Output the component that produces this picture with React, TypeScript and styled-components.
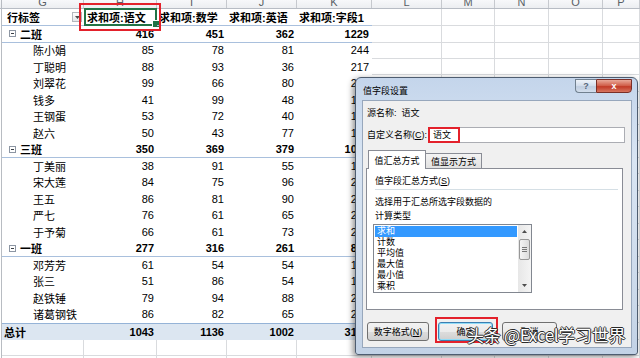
import React from 'react';
import styled, { createGlobalStyle, css } from 'styled-components';

const COLS = '2px 82px 73px 70px 70px 75px 70px 53px 54px 54px 1fr';
const GRID = '#d9dbde';
const FONT = `"Liberation Sans", "Noto Sans CJK SC", sans-serif`;

const GlobalStyle = createGlobalStyle`
  * { box-sizing: border-box; }
  html, body { margin: 0; padding: 0; background: #fff; }
  body { width: 640px; height: 358px; overflow: hidden; font-family: ${FONT}; }
`;

const Sheet = styled.div`
  position: relative;
  width: 640px;
  height: 358px;
  overflow: hidden;
  background: #fff;
  font-family: ${FONT};
  font-size: 11px;
  color: #000;
`;

const ColHeaders = styled.div`
  display: grid;
  grid-template-columns: ${COLS};
  height: 9px;
  background: linear-gradient(#f7f8fa, #eceef1);
  border-bottom: 1px solid #b7bcc4;
`;

const ColLetter = styled.div`
  display: flex;
  align-items: flex-end;
  justify-content: center;
  overflow: hidden;
  border-right: 1px solid #c6c9ce;
  color: #5a5f66;
  font-size: 11px;
  line-height: 12px;
`;

const Row = styled.div`
  display: grid;
  grid-template-columns: ${COLS};
  height: 16.5px;
`;

const Gutter = styled.div`
  border-right: 1px solid #b8bcc2;
`;

type Kind = 'head' | 'group' | 'item' | 'total';

const PivotCell = styled.div<{ $kind: Kind; $num?: boolean; $indent?: number }>`
  position: relative;
  display: flex;
  align-items: center;
  justify-content: ${p => (p.$num ? 'flex-end' : 'flex-start')};
  white-space: nowrap;
  padding: 0 3px 0 ${p => p.$indent ?? 2}px;
  font-weight: ${p => (p.$kind === 'item' ? 'normal' : 'bold')};
  ${p => (p.$kind === 'group' || p.$kind === 'head') && css`
    border-bottom: 1px solid #a9c0dd;
  `}
  ${p => p.$kind === 'total' && css`
    background: #dce6f1;
    border-top: 1px solid #95b3d7;
  `}
`;

const Selected = styled(PivotCell)`
  &::before {
    content: '';
    position: absolute;
    inset: -1px 0 -1px 0;
    border: 2px solid #217346;
  }
  &::after {
    content: '';
    position: absolute;
    right: -3px;
    bottom: -3px;
    width: 6px;
    height: 6px;
    background: #217346;
    border: 1px solid #fff;
  }
`;

const RedMark = styled.span<{ $l: number; $t: number; $w: number; $h: number }>`
  position: absolute;
  left: ${p => p.$l}px;
  top: ${p => p.$t}px;
  width: ${p => p.$w}px;
  height: ${p => p.$h}px;
  border: 2px solid #e3212b;
  pointer-events: none;
  z-index: 3;
`;

const Blank = styled.div`
  border-right: 1px solid ${GRID};
  border-bottom: 1px solid ${GRID};
`;

const ExpandBox = styled.span`
  position: relative;
  width: 7px;
  height: 7px;
  margin: 0 4px 0 5px;
  border: 1px solid #8d96a3;
  background: #fff;
  &::after {
    content: '';
    position: absolute;
    left: 1px;
    top: 2px;
    width: 3px;
    height: 1px;
    background: #3a3f46;
  }
`;

const FilterBtn = styled.span`
  margin-left: auto;
  margin-right: -1px;
  width: 10px;
  height: 10px;
  border: 1px solid #b3b7bd;
  background: linear-gradient(#fdfdfd, #e4e6e9);
  display: flex;
  align-items: center;
  justify-content: center;
`;

/* dialog */
const Dialog = styled.div`
  position: absolute;
  left: 355px;
  top: 77px;
  width: 283px;
  height: 278px;
  display: flex;
  flex-direction: column;
  border: 1px solid #4e5d70;
  border-radius: 6px 6px 3px 3px;
  background: linear-gradient(#c4d5eb, #d9e5f3 30%, #cbd9ea 80%, #c2d2e6);
  box-shadow: -2px 2px 6px rgba(0, 0, 0, 0.45);
  font-size: 9px;
  z-index: 2;
`;

const TitleBar = styled.div`
  display: flex;
  justify-content: space-between;
  align-items: flex-start;
  height: 22px;
  padding: 0 5px 0 7px;
`;

const Title = styled.span`
  margin-top: 7px;
  line-height: 12px;
`;

const CaptionBtns = styled.div`
  display: flex;
  margin-top: 1px;
`;

const CaptionBtn = styled.span<{ $close?: boolean }>`
  display: flex;
  align-items: center;
  justify-content: center;
  height: 14px;
  width: ${p => (p.$close ? 36 : 21)}px;
  font-size: 9px;
  font-weight: bold;
  ${p => p.$close ? css`
    color: #fff;
    border: 1px solid #7a2f27;
    border-radius: 0 0 4px 0;
    background: linear-gradient(#e9a999, #cf5a45 50%, #c13a26 55%, #d77560);
  ` : css`
    color: #56657a;
    border: 1px solid #71808f;
    border-right: none;
    border-radius: 0 0 0 4px;
    background: linear-gradient(#eef3f9, #d1dceb 50%, #bfcde0 55%, #d3deec);
  `}
`;

const Body = styled.div`
  flex: 1;
  display: flex;
  flex-direction: column;
  margin: 0 5px 6px 6px;
  border: 1px solid #97a7bc;
  background: #f0f0f0;
`;

const Line = styled.div<{ $mt: number }>`
  display: flex;
  align-items: center;
  margin-top: ${p => p.$mt}px;
  padding-left: 4px;
  line-height: 12px;
  white-space: nowrap;
`;

const Input = styled.div`
  position: relative;
  width: 196px;
  height: 16px;
  margin: 0 6px 0 auto;
  padding-left: 3px;
  display: flex;
  align-items: center;
  border: 1px solid #abadb3;
  background: #fff;
`;

const Tabs = styled.div`
  display: flex;
  align-items: flex-end;
  height: 18px;
  margin-top: 7px;
  padding-left: 5px;
`;

const Tab = styled.span<{ $active?: boolean }>`
  display: flex;
  align-items: center;
  justify-content: center;
  border: 1px solid #898c95;
  border-bottom: none;
  ${p => p.$active ? css`
    width: 58px;
    height: 19px;
    margin-bottom: -1px;
    background: #fff;
    position: relative;
    z-index: 1;
  ` : css`
    width: 56px;
    height: 15px;
    border-left: none;
    background: linear-gradient(#f3f3f3, #e1e1e1);
  `}
`;

const Panel = styled.div`
  height: 142px;
  margin: 0 8px 0 3px;
  padding-left: 8px;
  border: 1px solid #898c95;
  background: #fff;
  display: flex;
  flex-direction: column;
`;

const PanelText = styled.div<{ $mt: number }>`
  margin-top: ${p => p.$mt}px;
  line-height: 12px;
  white-space: nowrap;
`;

const Separator = styled.div`
  margin: 2px 4px 0 0;
  height: 1px;
  background: #d5dfe5;
`;

const ListBox = styled.div`
  display: flex;
  width: 159px;
  height: 69px;
  margin: 2px 0 0 -2px;
  border: 1px solid #828790;
  background: #fff;
  overflow: hidden;
`;

const Items = styled.div`
  flex: 1;
  padding: 1px;
`;

const Item = styled.div<{ $selected?: boolean }>`
  height: 11.1px;
  line-height: 11px;
  padding-left: 2px;
  ${p => p.$selected && css`
    background: #3399ff;
    color: #fff;
  `}
`;

const ScrollBar = styled.div`
  width: 13px;
  display: flex;
  flex-direction: column;
  background: linear-gradient(90deg, #e7e7e7, #f4f4f4);
`;

const ScrollArrow = styled.div`
  height: 13px;
  display: flex;
  align-items: center;
  justify-content: center;
`;

const Thumb = styled.div`
  height: 21px;
  margin: 1px 1px 0;
  border: 1px solid #979797;
  border-radius: 2px;
  background: linear-gradient(90deg, #f4f4f4, #dcdcdc);
  display: flex;
  align-items: center;
  justify-content: center;
`;

const Buttons = styled.div`
  display: flex;
  margin-top: 12px;
  padding: 0 6px 0 4px;
`;

const Button = styled.span<{ $default?: boolean; $push?: boolean; $w: number }>`
  position: relative;
  display: flex;
  align-items: center;
  justify-content: center;
  width: ${p => p.$w}px;
  height: 19px;
  margin-left: ${p => (p.$push ? 'auto' : '0')};
  border-radius: 3px;
  border: 1px solid ${p => (p.$default ? '#3c7fb1' : '#707070')};
  background: linear-gradient(#f2f2f2, #ebebeb 50%, #dddddd 51%, #cfcfcf);
  ${p => p.$default && css`
    box-shadow: inset 0 0 0 1px #8fdcf8;
  `}
  & + & { margin-left: ${p => (p.$push ? 'auto' : '9px')}; }
`;

const Watermark = styled.div`
  position: absolute;
  left: 467px;
  top: 324px;
  font-family: "Noto Sans CJK SC", "Liberation Sans", sans-serif;
  font-size: 17px;
  line-height: 22px;
  letter-spacing: -0.3px;
  color: #fff;
  white-space: nowrap;
  text-shadow: 1px 0 #2b2b2b, -1px 0 #2b2b2b, 0 1px #2b2b2b, 0 -1px #2b2b2b;
  z-index: 4;
`;

type Entry = { kind: Kind; label: string; values: number[] };

const groups: { name: string; total: number[]; people: [string, number, number, number][] }[] = [
  {
    name: '二班',
    total: [416, 451, 362],
    people: [
      ['陈小娟', 85, 78, 81],
      ['丁聪明', 88, 93, 36],
      ['刘翠花', 99, 66, 80],
      ['钱多', 41, 99, 48],
      ['王钢蛋', 53, 72, 40],
      ['赵六', 50, 43, 77],
    ],
  },
  {
    name: '三班',
    total: [350, 369, 379],
    people: [
      ['丁美丽', 38, 91, 55],
      ['宋大莲', 84, 75, 96],
      ['王五', 86, 81, 90],
      ['严七', 76, 61, 65],
      ['于予菊', 66, 61, 73],
    ],
  },
  {
    name: '一班',
    total: [277, 316, 261],
    people: [
      ['邓芳芳', 61, 54, 54],
      ['张三', 51, 86, 54],
      ['赵铁锤', 79, 94, 88],
      ['诸葛钢铁', 86, 82, 65],
    ],
  },
];

const sum = (v: number[]) => v.reduce((a, b) => a + b, 0);

const entries: Entry[] = [];
groups.forEach(g => {
  entries.push({ kind: 'group', label: g.name, values: [...g.total, sum(g.total)] });
  g.people.forEach(([n, a, b, c]) => entries.push({ kind: 'item', label: n, values: [a, b, c, a + b + c] }));
});
const grand = [0, 1, 2].map(i => sum(groups.map(g => g.total[i])));
entries.push({ kind: 'total', label: '总计', values: [...grand, sum(grand)] });

const letters = ['G', 'H', 'I', 'J', 'K', 'L', 'M', 'N', 'O', 'P'];
const headers = ['求和项:语文', '求和项:数学', '求和项:英语', '求和项:字段1'];
const calcTypes = ['求和', '计数', '平均值', '最大值', '最小值', '乘积'];

const Blanks = ({ n }: { n: number }) => (
  <>
    {Array.from({ length: n }, (_, i) => <Blank key={i} />)}
  </>
);

const Arrow = ({ up }: { up?: boolean }) => (
  <svg width="5" height="3" viewBox="0 0 5 3">
    <path d={up ? 'M0 3L2.5 0L5 3Z' : 'M0 0L5 0L2.5 3Z'} fill="#4d4d4d" />
  </svg>
);

const App: React.FC = () => (
  <>
    <GlobalStyle />
    <Sheet>
      <ColHeaders>
        <Gutter />
        {letters.map(l => <ColLetter key={l}>{l}</ColLetter>)}
      </ColHeaders>

      <Row>
        <Gutter />
        <PivotCell $kind="head" $indent={5}>
          行标签
          <FilterBtn><Arrow /></FilterBtn>
        </PivotCell>
        <Selected $kind="head" $indent={3}>
          {headers[0]}
          <RedMark $l={-5} $t={-6} $w={82} $h={28} />
        </Selected>
        {headers.slice(1).map(h => <PivotCell key={h} $kind="head">{h}</PivotCell>)}
        <Blanks n={5} />
      </Row>

      {entries.map(e => (
        <Row key={e.label}>
          <Gutter />
          <PivotCell $kind={e.kind} $indent={e.kind === 'item' ? 31 : 2}>
            {e.kind === 'group' && <ExpandBox />}
            {e.label}
          </PivotCell>
          {e.values.map((v, i) => <PivotCell key={i} $kind={e.kind} $num>{v}</PivotCell>)}
          <Blanks n={5} />
        </Row>
      ))}

      <Row><Gutter /><Blanks n={10} /></Row>
      <Row><Gutter /><Blanks n={10} /></Row>

      <Dialog>
        <TitleBar>
          <Title>值字段设置</Title>
          <CaptionBtns>
            <CaptionBtn>?</CaptionBtn>
            <CaptionBtn $close>x</CaptionBtn>
          </CaptionBtns>
        </TitleBar>
        <Body>
          <Line $mt={6}>源名称:&nbsp;&nbsp;语文</Line>
          <Line $mt={8}>
            自定义名称(<u>C</u>):
            <Input>
              语文
              <RedMark $l={-2} $t={-1} $w={32} $h={16} />
            </Input>
          </Line>
          <Tabs>
            <Tab $active>值汇总方式</Tab>
            <Tab>值显示方式</Tab>
          </Tabs>
          <Panel>
            <PanelText $mt={6}>值字段汇总方式(<u>S</u>)</PanelText>
            <Separator />
            <PanelText $mt={6}>选择用于汇总所选字段数据的</PanelText>
            <PanelText $mt={2}>计算类型</PanelText>
            <ListBox>
              <Items>
                {calcTypes.map((c, i) => <Item key={c} $selected={i === 0}>{c}</Item>)}
              </Items>
              <ScrollBar>
                <ScrollArrow><Arrow up /></ScrollArrow>
                <Thumb>
                  <svg width="5" height="5" viewBox="0 0 5 5">
                    <path d="M0 0.5H5M0 2.5H5M0 4.5H5" stroke="#777" strokeWidth="1" />
                  </svg>
                </Thumb>
                <div style={{ flex: 1 }} />
                <ScrollArrow><Arrow /></ScrollArrow>
              </ScrollBar>
            </ListBox>
          </Panel>
          <Buttons>
            <Button $w={62}>数字格式(<u>N</u>)</Button>
            <Button $w={55} $default $push>
              确定
              <RedMark $l={-4} $t={-6} $w={63} $h={26} />
            </Button>
            <Button $w={55}>取消</Button>
          </Buttons>
        </Body>
      </Dialog>

      <Watermark>头条 @Excel学习世界</Watermark>
    </Sheet>
  </>
);

export default App;
